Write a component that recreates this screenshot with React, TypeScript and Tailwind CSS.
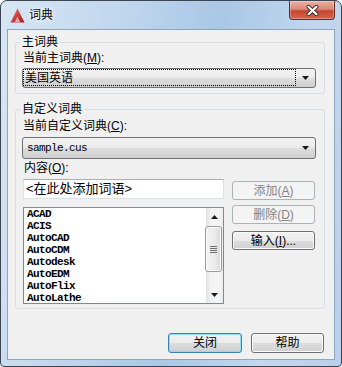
import clsx from 'clsx';

const words = ['ACAD', 'ACIS', 'AutoCAD', 'AutoCDM', 'Autodesk', 'AutoEDM', 'AutoFlix', 'AutoLathe'];

function Arrow({ up = false }: { up?: boolean }) {
  return (
    <svg width="7" height="4" viewBox="0 0 7 4">
      <polygon points={up ? '0,4 7,4 3.5,0' : '0,0 7,0 3.5,4'} fill="#1a1a1a" />
    </svg>
  );
}

function Btn({
  children,
  disabled = false,
  primary = false,
  className,
}: {
  children: React.ReactNode;
  disabled?: boolean;
  primary?: boolean;
  className?: string;
}) {
  return (
    <div
      className={clsx(
        'flex items-center justify-center rounded-[3px] border text-[12px] leading-[14px]',
        disabled
          ? 'border-[#adb2b5] bg-[#f4f4f4] text-[#838383]'
          : primary
            ? 'border-[#3c7fb1] bg-[linear-gradient(to_bottom,#f2f2f2_0%,#ebebeb_50%,#dddddd_51%,#cfcfcf_100%)] text-black shadow-[inset_0_0_0_1px_#8fdcf8]'
            : 'border-[#707070] bg-[linear-gradient(to_bottom,#f2f2f2_0%,#ebebeb_50%,#dddddd_51%,#cfcfcf_100%)] text-black shadow-[inset_0_0_0_1px_#fbfbfb]',
        className,
      )}
    >
      {children}
    </div>
  );
}

export default function App() {
  return (
    <div className="w-[342px] h-[367px] flex flex-col rounded-t-[7px] rounded-b-[4px] border border-[#3b4652] px-[6px] pb-[6px] bg-[linear-gradient(100deg,#d8e6f4_0%,#bcd4ec_35%,#a9c7e6_55%,#c3d8ee_80%,#b8d0ea_100%)] font-['Liberation_Sans','Noto_Sans_CJK_SC',sans-serif] text-black">
      {/* title bar */}
      <div className="h-[28px] flex items-start">
        <div className="mt-[7px] ml-[3px] flex items-center gap-[4px]">
          <svg width="15" height="15" viewBox="0 0 15 15">
            <defs>
              <linearGradient id="acad" x1="0" y1="0" x2="1" y2="1">
                <stop offset="0" stopColor="#f36a6a" />
                <stop offset="1" stopColor="#a3161b" />
              </linearGradient>
            </defs>
            <polygon points="7.5,0.5 14.5,14.5 0.5,14.5" fill="url(#acad)" />
            <polygon points="7.5,8.5 10.3,14.5 4.7,14.5" fill="#e9a4a4" />
          </svg>
          <span className="text-[12px] leading-[15px] [text-shadow:0_0_5px_#fff,0_0_3px_#fff]">词典</span>
        </div>
        <div className="ml-auto w-[46px] h-[19px] rounded-b-[4px] border border-t-0 border-[#6a2a22] bg-[linear-gradient(to_bottom,#eab0a2_0%,#da8a78_45%,#c8452e_55%,#d2674f_100%)] shadow-[inset_0_0_0_1px_rgba(255,255,255,0.3)] flex items-center justify-center">
          <svg width="13" height="11" viewBox="0 0 13 11">
            <path d="M2.5 1.8 L10.5 9.2 M10.5 1.8 L2.5 9.2" stroke="#3a2a28" strokeWidth="4" strokeLinecap="round" />
            <path d="M2.5 1.8 L10.5 9.2 M10.5 1.8 L2.5 9.2" stroke="#ffffff" strokeWidth="2.2" strokeLinecap="round" />
          </svg>
        </div>
      </div>

      {/* client */}
      <div className="flex-1 flex flex-col border border-[#8fa5bc] bg-[#f0f0f0] pl-[7px] pr-[9px] pt-[5px] text-[12px] leading-[14px]">
        <fieldset className="rounded-[3px] border border-[#d5dfe5] px-[6px] pt-[2px] pb-[5px]">
          <legend className="-ml-[2px] px-[2px] leading-[14px]">主词典</legend>
          <div className="pl-[1px]">
            当前主词典(<u>M</u>):
          </div>
          <div className="mt-[3px] h-[20px] w-[294px] flex rounded-[3px] border border-[#707070] bg-[linear-gradient(to_bottom,#f2f2f2_0%,#ebebeb_50%,#dddddd_51%,#cfcfcf_100%)] pt-0 pb-[1px]">
            <div className="flex-1 flex items-center border border-dotted border-black pl-[1px]">美国英语</div>
            <div className="w-[19px] flex items-center justify-center">
              <Arrow />
            </div>
          </div>
        </fieldset>

        <fieldset className="mt-[8px] rounded-[3px] border border-[#d5dfe5] px-[6px] pt-[3px] pb-[4px]">
          <legend className="-ml-[2px] px-[2px] leading-[14px]">自定义词典</legend>
          <div className="pl-[1px]">
            当前自定义词典(<u>C</u>):
          </div>
          <div className="mt-[4px] h-[22px] w-[294px] flex items-center rounded-[3px] border border-[#707070] bg-[linear-gradient(to_bottom,#f2f2f2_0%,#ebebeb_50%,#dddddd_51%,#cfcfcf_100%)]">
            <div className="flex-1 pl-[4px] font-['Liberation_Mono',monospace] text-[11px] tracking-[-0.6px]">sample.cus</div>
            <div className="w-[19px] flex items-center justify-center">
              <Arrow />
            </div>
          </div>
          <div className="mt-[2px] pl-[2px]">
            内容(<u>O</u>):
          </div>

          <div className="mt-[4px] ml-[1px] flex items-start gap-[8px]">
            <div className="w-[201px] flex flex-col">
              <div className="h-[20px] flex items-center border border-[#dbdfe6] border-t-[#abadb3] bg-white pl-[2px] text-[13px]">
                &lt;在此处添加词语&gt;
              </div>
              <div className="mt-[8px] h-[97px] flex border border-[#828790] bg-white overflow-hidden">
                <div className="flex-1 pl-[3px] font-['Liberation_Mono',monospace] text-[11px] leading-[12px] tracking-[-0.6px] font-bold overflow-hidden">
                  {words.map((w) => (
                    <div key={w} className="h-[12px]">
                      {w}
                    </div>
                  ))}
                </div>
                <div className="w-[17px] flex flex-col bg-[linear-gradient(to_right,#e3e3e3_0%,#f3f3f3_30%,#f5f5f5_70%,#ececec_100%)]">
                  <div className="h-[17px] flex items-center justify-center">
                    <Arrow up />
                  </div>
                  <div className="mt-[1px] mr-[1px] -ml-[1px] h-[46px] rounded-[3px] border border-[#9a9a9a] bg-[linear-gradient(to_right,#f3f3f3_0%,#ececec_50%,#dadada_100%)] shadow-[inset_0_0_0_1px_#fbfbfb] flex flex-col items-center justify-center gap-[1px]">
                    <div className="w-[7px] h-[1px] bg-[#6e6e6e]" />
                    <div className="w-[7px] h-[1px] bg-[#6e6e6e]" />
                    <div className="w-[7px] h-[1px] bg-[#6e6e6e]" />
                    <div className="w-[7px] h-[1px] bg-[#6e6e6e]" />
                  </div>
                  <div className="flex-1" />
                  <div className="h-[17px] flex items-center justify-center">
                    <Arrow />
                  </div>
                </div>
              </div>
            </div>
            <div className="w-[83px] flex flex-col">
              <Btn disabled className="mt-[2px] h-[19px]">
                添加(<u>A</u>)
              </Btn>
              <Btn disabled className="mt-[5px] h-[19px]">
                删除(<u>D</u>)
              </Btn>
              <Btn className="mt-[7px] h-[19px]">
                输入(<u>I</u>)...
              </Btn>
            </div>
          </div>
        </fieldset>

        <div className="mt-[24px] pr-[1px] flex justify-end gap-[9px]">
          <Btn primary className="w-[74px] h-[20px]">
            关闭
          </Btn>
          <Btn className="w-[73px] h-[20px]">帮助</Btn>
        </div>
      </div>
    </div>
  );
}
